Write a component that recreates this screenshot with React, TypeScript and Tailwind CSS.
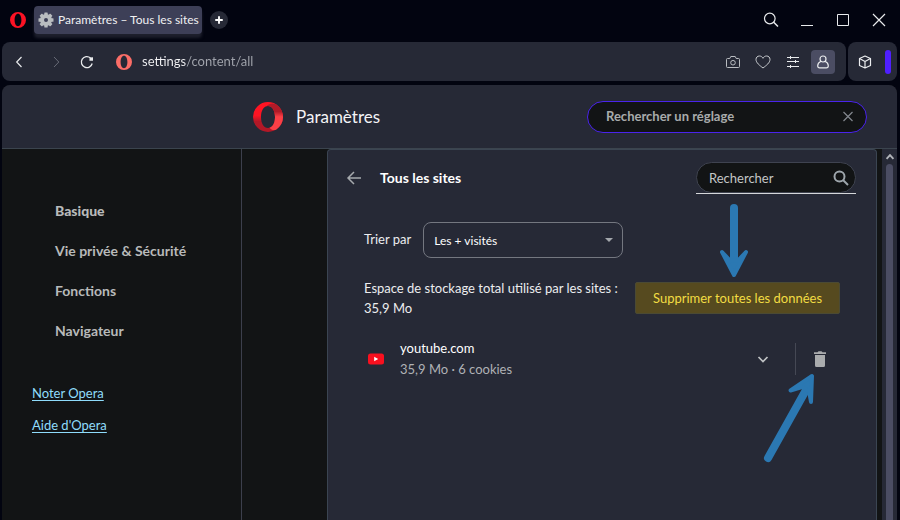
import type { ReactNode } from "react";

const menu = ["Basique", "Vie privée & Sécurité", "Fonctions", "Navigateur"];
const links = ["Noter Opera", "Aide d'Opera"];

function OperaLogo({ className }: { className: string }) {
  return (
    <svg viewBox="0 0 16 16" className={className} fill="currentColor" aria-hidden="true">
      <path fillRule="evenodd" d="M8 0a8 8 0 1 0 0 16A8 8 0 0 0 8 0Zm0 1.800c2 0 3.400 2.700 3.400 6.200S10 14.200 8 14.200 4.600 11.500 4.600 8 6 1.800 8 1.800Z" />
    </svg>
  );
}

function OperaBrand() {
  return (
    <svg width="32" height="32" viewBox="0 0 32 32" className="shrink-0" aria-hidden="true">
      <defs>
        <linearGradient id="brand-left" x1="0" y1="0" x2="0" y2="1">
          <stop offset="0.45" stopColor="#ff1423" />
          <stop offset="0.65" stopColor="#b21827" />
        </linearGradient>
        <linearGradient id="brand-right" x1="0" y1="0" x2="0" y2="1">
          <stop offset="0.3" stopColor="#b01b28" />
          <stop offset="0.5" stopColor="#fb3f46" />
        </linearGradient>
      </defs>
      <path fill="url(#brand-left)" fillRule="evenodd" d="M16 1a15 15 0 1 0 0 30A15 15 0 0 0 16 1Zm0 4c4.200 0 7 4.600 7 11s-2.800 11-7 11-7-4.600-7-11S11.800 5 16 5Z" />
      <path fill="url(#brand-right)" d="M14.500 5.200C17 2.500 20.500 1.700 24 3.300A15 15 0 0 1 24 28.700C21.500 29.800 19 28.500 17.500 26.800 20.800 25.900 23 21.700 23 16 23 9.600 20.200 5 16 5c-.5 0-1 .1-1.500.2Z" />
    </svg>
  );
}

function Gear() {
  return (
    <svg width="16" height="16" viewBox="0 0 16 16" className="shrink-0 text-[#b9bdc0]" aria-hidden="true">
      <circle cx="8" cy="8" r="4" fill="none" stroke="currentColor" strokeWidth="4" />
      {[0, 45, 90, 135].map((angle) => (
        <g key={angle} transform={`rotate(${angle} 8 8)`} fill="currentColor">
          <rect x="6.300" y="0.500" width="3.400" height="3" rx="0.500" />
          <rect x="6.300" y="12.500" width="3.400" height="3" rx="0.500" />
        </g>
      ))}
    </svg>
  );
}

function Icon({ size = 16, stroke = 1, children }: { size?: number; stroke?: number; children: ReactNode }) {
  return (
    <svg width={size} height={size} viewBox="0 0 16 16" fill="none" stroke="currentColor" strokeWidth={stroke} className="shrink-0" aria-hidden="true">
      {children}
    </svg>
  );
}

function TabBar() {
  const control = "flex w-9 items-center justify-center";
  return (
    <div className="flex h-[42px] shrink-0 items-start pt-1.5 pr-[3px] pl-2.5">
      <div className="flex h-7 w-full items-center">
        <button aria-label="Menu Opera">
          <OperaLogo className="size-4 text-[#fb1224]" />
        </button>
        <div className="ml-2 flex h-7 w-[168px] shrink-0 items-center gap-1 rounded bg-[#3d3f57] pl-1 text-xs whitespace-nowrap text-[#f0f0f2] shadow-[0_4px_3px_#1d1f2c]">
          <Gear />
          Paramètres – Tous les sites
        </div>
        <button aria-label="Nouvel onglet" className="ml-2 flex size-[18px] items-center justify-center rounded-full bg-[#262936] text-white">
          <Icon size={10} stroke={3}><path d="M8 2v12M2 8h12" /></Icon>
        </button>
        <div className="ml-auto flex text-[#e8eaec]">
          <button aria-label="Rechercher dans les onglets" className={control}>
            <Icon stroke={1.2}><circle cx="6.800" cy="6.500" r="5.300" /><path d="m10.500 10 4.500 4.500" strokeWidth="1.500" /></Icon>
          </button>
          <button aria-label="Réduire" className={control}>
            <Icon><path d="M2 13.500h12" /></Icon>
          </button>
          <button aria-label="Agrandir" className={control}>
            <Icon><path d="M2.500 2.500h11v11h-11z" /></Icon>
          </button>
          <button aria-label="Fermer" className={control}>
            <Icon stroke={1.2}><path d="m2 2 12 12M14 2 2 14" /></Icon>
          </button>
        </div>
      </div>
    </div>
  );
}

function Toolbar() {
  const tool = "flex size-6 items-center justify-center rounded";
  return (
    <div className="mr-[3px] ml-0.5 flex h-[39px] shrink-0 gap-0.5">
      <div className="flex grow items-center rounded-lg bg-[#262936] pr-[11px] pl-1.5 text-[#e8eaec]">
        <button aria-label="Précédent" className={tool}>
          <Icon stroke={1.2}><path d="M9.500 3 4.700 8l4.800 5" /></Icon>
        </button>
        <button aria-label="Suivant" className="ml-3 flex size-6 items-center justify-center text-[#686b77]">
          <Icon><path d="m6 3 4.800 5L6 13" /></Icon>
        </button>
        <button aria-label="Actualiser" className="ml-[7px] flex size-6 items-center justify-center">
          <Icon stroke={1.3}>
            <path d="M13.200 9.500A5.500 5.500 0 1 1 11.500 4" />
            <path d="M14 3.200v3.600h-3.600l.2-3.200z" fill="currentColor" stroke="none" />
          </Icon>
        </button>
        <OperaLogo className="ml-[17px] size-4 shrink-0 text-[#fb6d67]" />
        <input
          aria-label="Adresse"
          defaultValue="settings/content/all"
          className="ml-2.5 min-w-0 grow bg-linear-to-r from-[#f4f4f6] from-[45px] to-[#a3a6ae] to-[45px] bg-clip-text text-[13px] text-transparent outline-none"
        />
        <div className="flex gap-1.5">
          <button aria-label="Capture" className={`${tool} text-[#b9bcc1]`}>
            <Icon>
              <path d="M2.500 4.500h2.300l1-2h4.400l1 2h2.300q1 0 1 1v7q0 1-1 1h-11q-1 0-1-1v-7q0-1 1-1Z" />
              <circle cx="8" cy="8.700" r="2.300" />
            </Icon>
          </button>
          <button aria-label="Favoris" className={`${tool} text-[#c9ccd0]`}>
            <Icon><path d="M8 14C4.500 11.300 1 8.700 1 5.400 1 3.400 2.500 2 4.400 2 6 2 7.300 2.900 8 4.300 8.700 2.900 10 2 11.600 2 13.500 2 15 3.400 15 5.400 15 8.700 11.500 11.300 8 14Z" /></Icon>
          </button>
          <button aria-label="Configuration" className={tool}>
            <Icon><path d="M2 3.500h12M2 7.500h12M2 12.500h12M5.500 2v3M10.500 6v3M5.500 11v3" /></Icon>
          </button>
          <button aria-label="Profil" className={`${tool} bg-[#4b4d63]`}>
            <Icon stroke={1.2}>
              <circle cx="8" cy="5" r="3" />
              <path d="M6 7.300C3.800 8.300 2.700 10 2.700 11.700c0 1.300.8 2.100 2 2.100h6.600c1.200 0 2-.8 2-2.100 0-1.700-1.100-3.400-3.300-4.400" />
            </Icon>
          </button>
        </div>
      </div>
      <div className="flex w-[49px] shrink-0 items-center justify-between rounded-lg bg-[#262936] pr-1.5 pl-[9px] text-[#eceef0]">
        <button aria-label="Extensions">
          <Icon stroke={1.2}><path d="m8 2 5.500 2.500v7L8 14l-5.500-2.500v-7L8 2ZM2.500 4.500 8 7.500l5.500-3M8 7.500V14" strokeLinejoin="round" /></Icon>
        </button>
        <span className="h-6 w-1.5 rounded-full bg-[#4f1fff]" />
      </div>
    </div>
  );
}

function Header() {
  return (
    <header className="flex h-16 shrink-0 items-center border-b border-[#3b444e] bg-[#262936] pr-[30px] pl-[250px]">
      <OperaBrand />
      <h1 className="ml-3 text-[17px] text-[#f4f4f6]">Paramètres</h1>
      <div className="ml-auto flex h-8 w-[280px] items-center justify-between rounded-full border border-[#4a24ec] bg-[#121415] pr-2.5 pl-[18px]">
        <input
          aria-label="Rechercher un réglage"
          placeholder="Rechercher un réglage"
          className="min-w-0 grow text-[13px] font-bold outline-none placeholder:text-[#a8abab]"
        />
        <button aria-label="Effacer" className="text-[#83878e]">
          <Icon stroke={1.2}><path d="m3.500 3 9 9M12.500 3l-9 9" /></Icon>
        </button>
      </div>
    </header>
  );
}

function Sidebar() {
  return (
    <aside className="w-60 shrink-0 border-r border-[#3c3f4c] pt-[42px]">
      <nav>
        {menu.map((item) => (
          <a key={item} href="#" className="block pl-[53px] text-sm leading-10 font-bold text-[#b8baba] first:font-black">
            {item}
          </a>
        ))}
      </nav>
      <div className="mt-[26px] pl-[30px] text-[13px] text-[#8fdcfb]">
        {links.map((link) => (
          <a key={link} href="#" className="block leading-8 underline underline-offset-2">
            {link}
          </a>
        ))}
      </div>
    </aside>
  );
}

function Sites() {
  return (
    <section className="relative ml-[85px] grow rounded-t border border-b-0 border-[#3b4552] bg-[#262936] text-[13px] text-[#ecedef]">
      <div className="flex items-start pt-3 pr-5 pl-[18px]">
        <button aria-label="Retour" className="flex h-8 items-center text-[#a5a9ad]">
          <Icon stroke={1.5}><path d="M15 8H2M8 2 2 8l6 6" /></Icon>
        </button>
        <h2 className="ml-[18px] text-sm leading-8 font-bold text-white">Tous les sites</h2>
        <div className="ml-auto w-[160px] border-b border-[#d5d7da]">
          <div className="flex h-[31px] items-center rounded-full border border-[#3f4350] bg-[#121415] pr-1.5 pl-3 text-[#9ea6ac]">
            <input
              aria-label="Rechercher"
              placeholder="Rechercher"
              className="min-w-0 grow pt-0.5 outline-none placeholder:text-[#c4c6c6]"
            />
            <Icon stroke={2}><circle cx="6.500" cy="6.500" r="5" /><path d="m10 10 5 5" /></Icon>
          </div>
        </div>
      </div>

      <div className="mt-7 flex items-center pl-9">
        <label htmlFor="sort">Trier par</label>
        <div className="relative ml-3">
          <select id="sort" className="h-9 w-[200px] appearance-none rounded-lg border border-[#747780] bg-[#262936] pt-0.5 pl-2.5 text-xs text-white">
            <option>Les + visités</option>
          </select>
          <svg width="8" height="4" viewBox="0 0 8 4" className="pointer-events-none absolute top-4 right-2.5" fill="#a3a7ac" aria-hidden="true">
            <path d="M0 0h8L4 4z" />
          </svg>
        </div>
      </div>

      <div className="mt-5 flex items-center justify-between pr-9 pl-9">
        <p className="leading-5 whitespace-nowrap">
          Espace de stockage total utilisé par les sites :
          <br />
          35,9 Mo
        </p>
        <button className="h-8 w-[205px] shrink-0 rounded-xs border border-[#4b4a34] bg-[#564a1f] pt-0.5 whitespace-nowrap text-[#f2dc43]">
          Supprimer toutes les données
        </button>
      </div>

      <div className="mt-5 flex items-center pr-12 pl-10">
        <svg width="16" height="12" viewBox="0 0 16 12" className="shrink-0" aria-hidden="true">
          <rect y="0.500" width="16" height="11" rx="2.500" fill="#f9101f" />
          <path d="M6.200 3.700v4.600L10.200 6z" fill="#fff" />
        </svg>
        <div className="ml-4 leading-[21px]">
          <p className="text-white">youtube.com</p>
          <p className="text-[#afb1b5]">35,9 Mo · 6 cookies</p>
        </div>
        <button aria-label="Détails" className="ml-auto text-[#c0c3c5]">
          <Icon stroke={1.7}><path d="m3.500 6 4.500 4.500L12.500 6" /></Icon>
        </button>
        <span className="ml-6 h-8 w-px bg-[#454854]" />
        <button aria-label="Supprimer" className="ml-4 text-[#a9abad]">
          <svg width="16" height="16" viewBox="0 0 16 16" fill="currentColor" aria-hidden="true">
            <path d="M2 1.300h3.500L6.500.3h3l1 1H14V3H2zM3 4h10v10.500q0 1.500-1.500 1.500h-7Q3 16 3 14.500z" />
          </svg>
        </button>
      </div>

      {/* pointers to the two delete actions */}
      <svg width="32" height="78" viewBox="0 0 32 78" className="pointer-events-none absolute top-[51px] right-[126px]" aria-hidden="true">
        <path d="M16 7v54" stroke="#2b78b2" strokeWidth="8" strokeLinecap="round" />
        <path d="M4 51 16 74l12-23-8 8.500h-8z" fill="#2b78b2" stroke="#2b78b2" strokeWidth="4" strokeLinejoin="round" />
      </svg>
      <svg width="54" height="94" viewBox="0 0 54 94" className="pointer-events-none absolute top-[221px] right-[60px]" aria-hidden="true">
        <path d="M6 87 44 19" stroke="#2b78b2" strokeWidth="8" strokeLinecap="round" />
        <path d="M28.500 19.500 50 5l-1 26-2-11-7-4z" fill="#2b78b2" stroke="#2b78b2" strokeWidth="4" strokeLinejoin="round" />
      </svg>
    </section>
  );
}

export default function App() {
  return (
    <div className="flex h-screen flex-col overflow-hidden bg-[#020410] font-['Lato','Open_Sans',sans-serif]">
      <TabBar />
      <Toolbar />
      <div className="mt-1 mr-[3px] ml-0.5 flex min-h-0 grow flex-col overflow-hidden rounded-t-lg bg-[#121415]">
        <Header />
        <div className="flex min-h-0 grow">
          <Sidebar />
          <main className="flex grow">
            <Sites />
          </main>
          <div className="ml-[5px] flex w-[15px] shrink-0 flex-col items-center bg-[#262936] text-[#b2b5ba]">
            <div className="flex h-[15px] items-center">
              <Icon size={10} stroke={3}><path d="m2.500 11 5.500-6 5.500 6" /></Icon>
            </div>
            <span className="w-[7px] grow rounded-t-full bg-[#4b4d63]" />
          </div>
        </div>
      </div>
    </div>
  );
}
